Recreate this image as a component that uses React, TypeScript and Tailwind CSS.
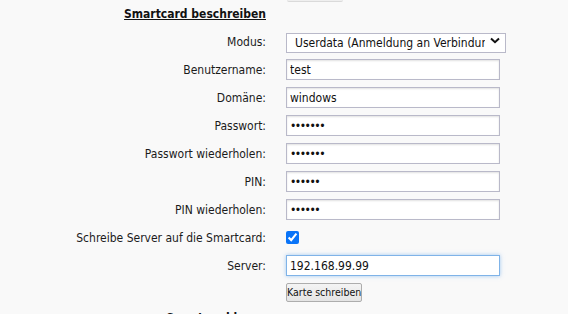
import { useState } from "react";

const font = "font-['DejaVu_Sans_Condensed','Liberation_Sans',sans-serif]";

const inputCls =
  "h-[21px] w-[214px] border border-[#b9b9c9] bg-white px-[3px] text-[12px] text-[#111] shadow-[inset_0_1px_2px_rgba(0,0,0,0.12)] outline-none";

const pwCls = `${inputCls} tracking-[-1.5px] text-[11px]`;

function Row({ label, children }: { label: string; children: React.ReactNode }) {
  return (
    <div className="mb-[7px] flex h-[21px] items-center">
      <div className="w-[266px] shrink-0 text-right text-[12px] text-[#1b1b1b]">{label}</div>
      <div className="ml-5 flex items-center">{children}</div>
    </div>
  );
}

export default function App() {
  const [mode, setMode] = useState("userdata");
  const [checked, setChecked] = useState(true);

  return (
    <div className={`h-[314px] overflow-hidden bg-[#f9f9f9] ${font}`}>
      {/* bottom edge of the button above */}
      <div className="ml-[287px] h-[2px] w-[56px] rounded-b-sm border-b border-[#dadada] bg-[#efefef]" />

      {/* heading */}
      <div className="mt-px mb-[7px] flex h-[21px] items-center">
        <div className="w-[266px] text-right text-[12px] font-bold text-[#111] underline">
          Smartcard beschreiben
        </div>
      </div>

      <Row label="Modus:">
        <div className="relative">
          <select
            value={mode}
            onChange={(e) => setMode(e.target.value)}
            className="h-[20px] w-[220px] appearance-none border border-[#b9b9c9] bg-white pl-[8px] pr-[20px] text-[12px] text-[#111] outline-none"
          >
            <option value="userdata">Userdata (Anmeldung an Verbindungsserver)</option>
            <option value="cert">Zertifikat</option>
          </select>
          <svg
            className="pointer-events-none absolute right-[6px] top-[7px]"
            width="10"
            height="7"
            viewBox="0 0 10 7"
          >
            <path d="M1 1.5 5 5.2 9 1.5" fill="none" stroke="#111" strokeWidth="2" />
          </svg>
        </div>
      </Row>

      <Row label="Benutzername:">
        <input className={inputCls} defaultValue="test" />
      </Row>
      <Row label="Domäne:">
        <input className={inputCls} defaultValue="windows" />
      </Row>
      <Row label="Passwort:">
        <input type="password" className={pwCls} defaultValue="1234567" />
      </Row>
      <Row label="Passwort wiederholen:">
        <input type="password" className={pwCls} defaultValue="1234567" />
      </Row>
      <Row label="PIN:">
        <input type="password" className={pwCls} defaultValue="123456" />
      </Row>
      <Row label="PIN wiederholen:">
        <input type="password" className={pwCls} defaultValue="123456" />
      </Row>
      <Row label="Schreibe Server auf die Smartcard:">
        <input
          type="checkbox"
          checked={checked}
          onChange={(e) => setChecked(e.target.checked)}
          className="m-0 h-[13px] w-[13px] accent-[#0a74f8]"
        />
      </Row>
      <Row label="Server:">
        <input
          className="h-[21px] w-[214px] border border-[#7fb3e8] bg-white px-[3px] text-[12px] text-[#111] shadow-[0_0_4px_rgba(90,160,235,0.55)] outline-none"
          defaultValue="192.168.99.99"
        />
      </Row>

      <div className="flex h-[19px]">
        <div className="w-[266px] shrink-0" />
        <button className="ml-5 h-[19px] w-[76px] whitespace-nowrap rounded-[2px] border border-[#adadad] bg-gradient-to-b from-[#f4f4f4] to-[#e4e4e4] px-0 text-[10.5px] leading-none text-[#111]">
          Karte schreiben
        </button>
      </div>

      {/* next section heading, cut off at the bottom */}
      <div className="mt-[5px] flex h-[21px] items-center">
        <div className="w-[266px] text-right text-[12px] font-bold text-[#111] underline">
          Smartcard lesen
        </div>
      </div>
    </div>
  );
}
